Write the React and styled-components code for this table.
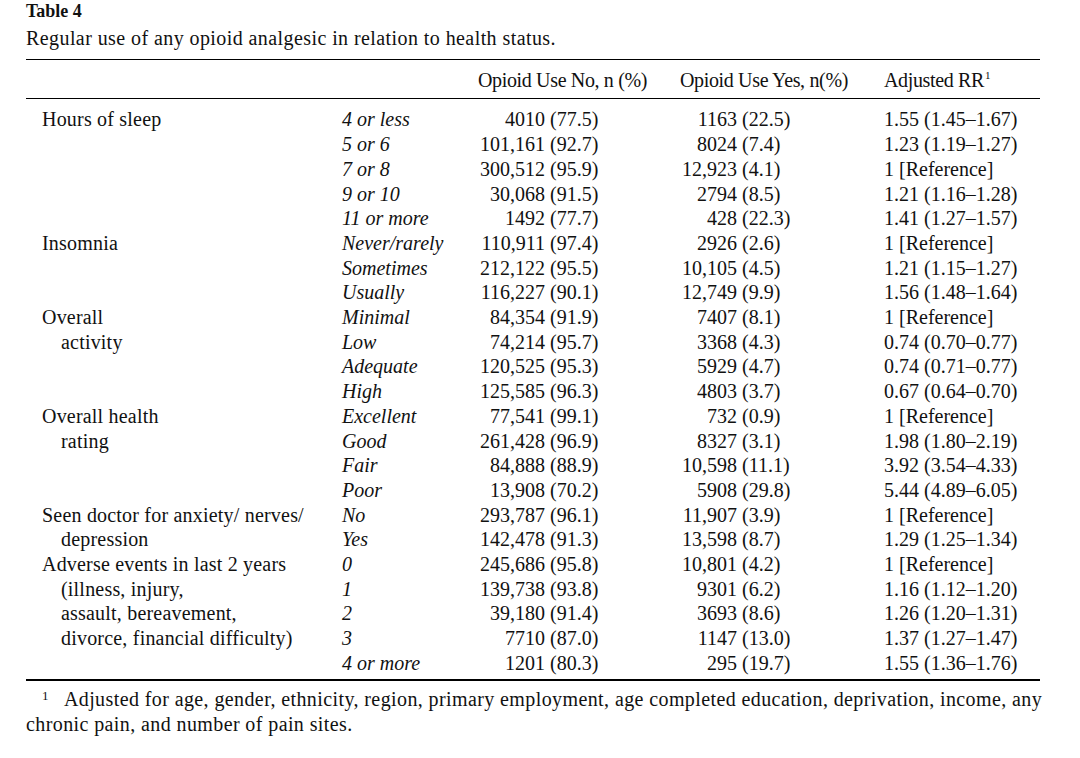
import React from "react";
import styled, { createGlobalStyle } from "styled-components";

const GlobalStyle = createGlobalStyle`
  html, body {
    margin: 0;
    padding: 0;
    background: #ffffff;
  }
  body {
    font-family: "Liberation Serif", "Times New Roman", serif;
    color: #111111;
  }
`;

const Page = styled.div`
  width: 1014px;
  padding: 1px 0 0 26px;
`;

const Title = styled.div`
  font-size: 18px;
  font-weight: 700;
  line-height: 20px;
`;

const Caption = styled.div`
  font-size: 20px;
  line-height: 24.7px;
  letter-spacing: 0.42px;
  margin-top: 5px;
`;

const Table = styled.table`
  width: 1014px;
  table-layout: fixed;
  border-collapse: collapse;
  margin-top: 8px;
  font-size: 20px;
  line-height: 24.7px;
`;

const HeadRow = styled.tr`
  border-top: 1.5px solid #000;
  border-bottom: 1.5px solid #000;
`;

const HeadCell = styled.th`
  font-weight: 400;
  text-align: left;
  padding: 8px 0 6px;
  letter-spacing: -0.35px;
  white-space: nowrap;
`;

const Row = styled.tr`
  border-bottom: ${(p) => (p.$last ? "2px solid #000" : "none")};
`;

const Cell = styled.td`
  padding: ${(p) => (p.$first ? "8px" : "0")} 0 ${(p) => (p.$last ? "3px" : "0")};
  white-space: nowrap;
  vertical-align: top;
`;

const LabelCell = styled(Cell)`
  padding-left: ${(p) => (p.$indent ? "35px" : "16px")};
  letter-spacing: 0.2px;
`;

const CatCell = styled(Cell)`
  font-style: italic;
`;

const Num = styled.span`
  display: inline-block;
  width: ${(p) => p.$w}px;
  text-align: right;
`;

const Pct = styled.span`
  margin-left: 5px;
`;

const Sup = styled.sup`
  font-size: 11px;
  line-height: 0;
  vertical-align: 8px;
  margin-left: 1px;
`;

const Footnote = styled.div`
  margin-top: 6px;
  font-size: 20px;
  line-height: 25px;
  letter-spacing: 0.4px;
`;

const NoteLine = styled.div`
  white-space: nowrap;
  padding-left: ${(p) => (p.$lead ? "16px" : "0")};
`;

const NoteMark = styled.span`
  display: inline-block;
  font-size: 13px;
  line-height: 13px;
  vertical-align: top;
  margin: 2px 15px 0 0;
`;

const rows = [
  ["Hours of sleep", false, "4 or less", "4010", "77.5", "1163", "22.5", "1.55 (1.45–1.67)"],
  ["", false, "5 or 6", "101,161", "92.7", "8024", "7.4", "1.23 (1.19–1.27)"],
  ["", false, "7 or 8", "300,512", "95.9", "12,923", "4.1", "1 [Reference]"],
  ["", false, "9 or 10", "30,068", "91.5", "2794", "8.5", "1.21 (1.16–1.28)"],
  ["", false, "11 or more", "1492", "77.7", "428", "22.3", "1.41 (1.27–1.57)"],
  ["Insomnia", false, "Never/rarely", "110,911", "97.4", "2926", "2.6", "1 [Reference]"],
  ["", false, "Sometimes", "212,122", "95.5", "10,105", "4.5", "1.21 (1.15–1.27)"],
  ["", false, "Usually", "116,227", "90.1", "12,749", "9.9", "1.56 (1.48–1.64)"],
  ["Overall", false, "Minimal", "84,354", "91.9", "7407", "8.1", "1 [Reference]"],
  ["activity", true, "Low", "74,214", "95.7", "3368", "4.3", "0.74 (0.70–0.77)"],
  ["", false, "Adequate", "120,525", "95.3", "5929", "4.7", "0.74 (0.71–0.77)"],
  ["", false, "High", "125,585", "96.3", "4803", "3.7", "0.67 (0.64–0.70)"],
  ["Overall health", false, "Excellent", "77,541", "99.1", "732", "0.9", "1 [Reference]"],
  ["rating", true, "Good", "261,428", "96.9", "8327", "3.1", "1.98 (1.80–2.19)"],
  ["", false, "Fair", "84,888", "88.9", "10,598", "11.1", "3.92 (3.54–4.33)"],
  ["", false, "Poor", "13,908", "70.2", "5908", "29.8", "5.44 (4.89–6.05)"],
  ["Seen doctor for anxiety/ nerves/", false, "No", "293,787", "96.1", "11,907", "3.9", "1 [Reference]"],
  ["depression", true, "Yes", "142,478", "91.3", "13,598", "8.7", "1.29 (1.25–1.34)"],
  ["Adverse events in last 2 years", false, "0", "245,686", "95.8", "10,801", "4.2", "1 [Reference]"],
  ["(illness, injury,", true, "1", "139,738", "93.8", "9301", "6.2", "1.16 (1.12–1.20)"],
  ["assault, bereavement,", true, "2", "39,180", "91.4", "3693", "8.6", "1.26 (1.20–1.31)"],
  ["divorce, financial difficulty)", true, "3", "7710", "87.0", "1147", "13.0", "1.37 (1.27–1.47)"],
  ["", false, "4 or more", "1201", "80.3", "295", "19.7", "1.55 (1.36–1.76)"],
];

export default function App() {
  return (
    <>
      <GlobalStyle />
      <Page>
        <Title>Table 4</Title>
        <Caption>Regular use of any opioid analgesic in relation to health status.</Caption>
        <Table>
          <colgroup>
            <col style={{ width: 316 }} />
            <col style={{ width: 136 }} />
            <col style={{ width: 202 }} />
            <col style={{ width: 204 }} />
            <col style={{ width: 156 }} />
          </colgroup>
          <thead>
            <HeadRow>
              <HeadCell />
              <HeadCell />
              <HeadCell>Opioid Use No, n (%)</HeadCell>
              <HeadCell>Opioid Use Yes, n(%)</HeadCell>
              <HeadCell>
                Adjusted RR<Sup>1</Sup>
              </HeadCell>
            </HeadRow>
          </thead>
          <tbody>
            {rows.map(([label, indent, cat, n1, p1, n2, p2, rr], i) => {
              const first = i === 0;
              const last = i === rows.length - 1;
              return (
                <Row key={i} $last={last}>
                  <LabelCell $first={first} $last={last} $indent={indent}>
                    {label}
                  </LabelCell>
                  <CatCell $first={first} $last={last}>
                    {cat}
                  </CatCell>
                  <Cell $first={first} $last={last}>
                    <Num $w={67}>{n1}</Num>
                    <Pct>({p1})</Pct>
                  </Cell>
                  <Cell $first={first} $last={last}>
                    <Num $w={57}>{n2}</Num>
                    <Pct>({p2})</Pct>
                  </Cell>
                  <Cell $first={first} $last={last}>
                    {rr}
                  </Cell>
                </Row>
              );
            })}
          </tbody>
        </Table>
        <Footnote>
          <NoteLine $lead>
            <NoteMark>1</NoteMark>
            Adjusted for age, gender, ethnicity, region, primary employment, age completed education, deprivation, income, any
          </NoteLine>
          <NoteLine>chronic pain, and number of pain sites.</NoteLine>
        </Footnote>
      </Page>
    </>
  );
}
